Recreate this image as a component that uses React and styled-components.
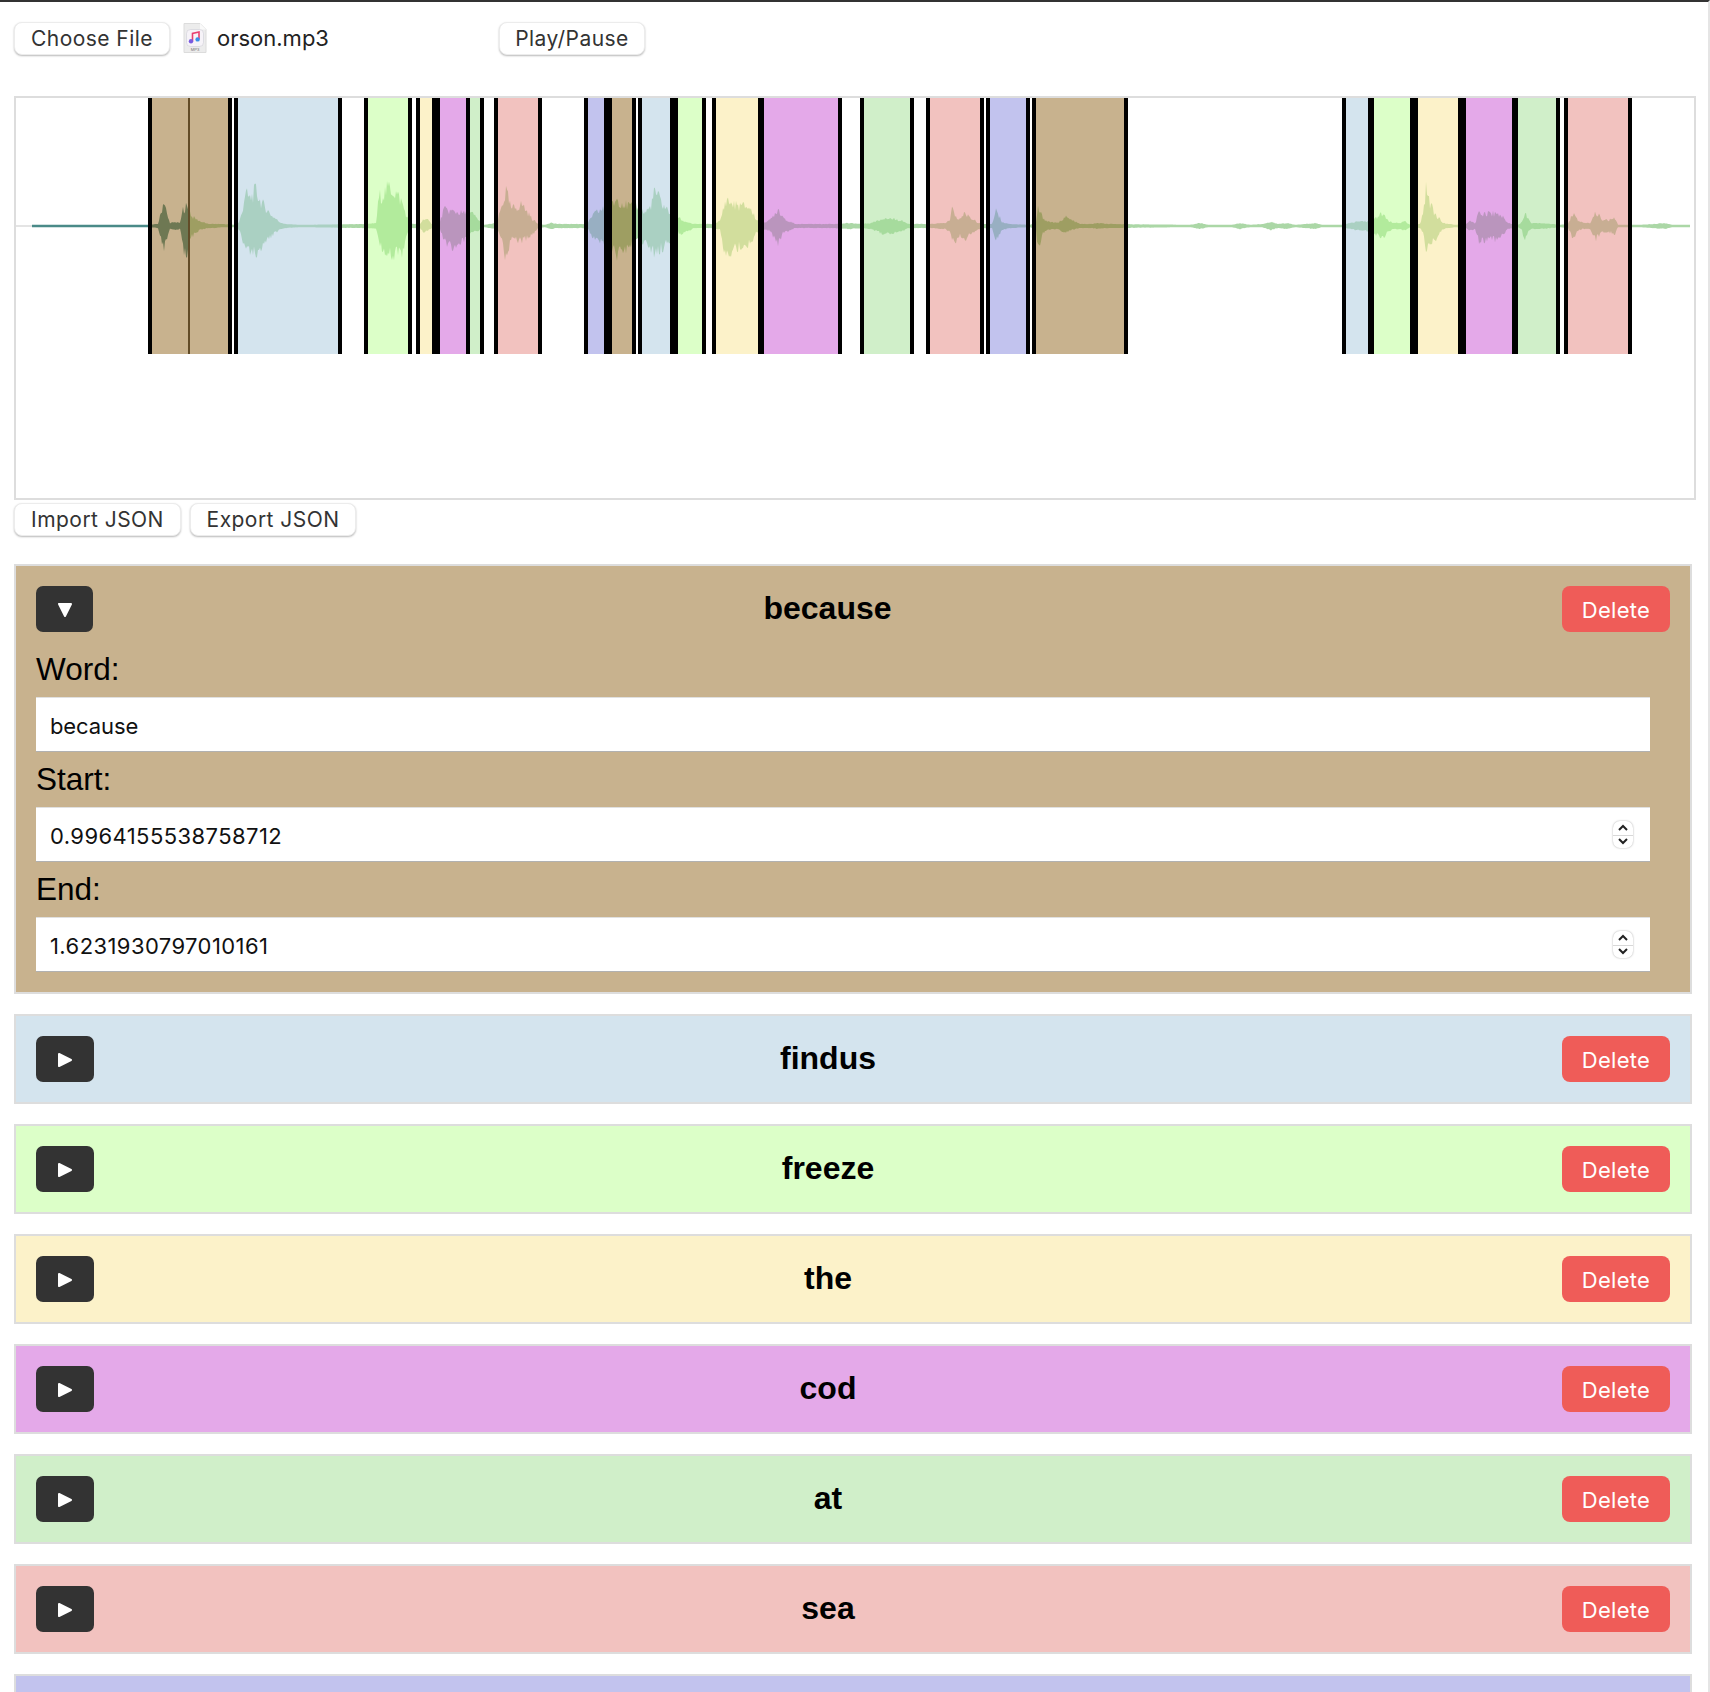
import React from "react";
import styled, { createGlobalStyle } from "styled-components";

const COLORS = {
    tan: "#c8b28e",
    blue: "#d4e4ee",
    green: "#dcffc8",
    yellow: "#fcf2c9",
    pink: "#e4a9e9",
    mint: "#d0efc9",
    red: "#f2c2bf",
    indigo: "#c2c3ee",
};

const REGIONS = [
    [148, 232, "tan"], [234, 342, "blue"], [364, 412, "green"], [416, 436, "yellow"],
    [436, 470, "pink"], [466, 484, "mint"], [494, 542, "red"], [584, 608, "indigo"],
    [608, 636, "tan"], [638, 674, "blue"], [674, 706, "green"], [712, 762, "yellow"],
    [760, 842, "pink"], [860, 914, "mint"], [926, 984, "red"], [986, 1030, "indigo"],
    [1032, 1128, "tan"], [1342, 1372, "blue"], [1370, 1414, "green"], [1414, 1462, "yellow"],
    [1462, 1516, "pink"], [1514, 1560, "mint"], [1564, 1632, "red"],
];

const WORDS = [
    { word: "findus", color: "blue" },
    { word: "freeze", color: "green" },
    { word: "the", color: "yellow" },
    { word: "cod", color: "pink" },
    { word: "at", color: "mint" },
    { word: "sea", color: "red" },
];

// envelope of the audio: x, height above the centre line, height below it
const ENVELOPE = [
    [32, 1, 1], [148, 1, 1], [158, 2, 2], [161, 14, 12], [164, 29, 26], [167, 12, 14], [170, 3, 3],
    [176, 4, 4], [180, 3, 3], [183, 18, 24], [186, 21, 33], [189, 18, 24], [192, 10, 11], [200, 5, 4],
    [208, 2, 2], [215, 2, 2], [222, 2, 1], [236, 1, 1], [239, 4, 4], [242, 14, 12], [245, 36, 24], [250, 30, 26],
    [256, 39, 30], [260, 28, 24], [264, 22, 20], [272, 11, 10], [280, 4, 3], [285, 2, 2], [300, 1, 1],
    [368, 2, 2], [376, 3, 3], [379, 32, 16], [384, 36, 28], [390, 43, 32], [396, 36, 30], [402, 26, 30],
    [407, 9, 10], [412, 2, 2], [420, 2, 2], [424, 8, 7], [428, 6, 5], [432, 2, 2], [440, 5, 4], [444, 18, 16],
    [452, 16, 24], [463, 14, 17], [473, 13, 6], [479, 6, 5], [484, 1, 1], [490, 2, 2], [497, 3, 3],
    [501, 19, 12], [506, 38, 36], [511, 19, 14], [516, 20, 14], [522, 24, 17], [528, 14, 12], [532, 8, 10],
    [538, 2, 2], [545, 1, 1], [551, 3, 3], [558, 2, 2], [584, 2, 2], [588, 3, 3], [592, 11, 11],
    [598, 16, 18], [605, 19, 16], [611, 22, 24], [617, 30, 32], [626, 23, 27], [632, 21, 20], [638, 23, 18],
    [644, 14, 17], [650, 20, 24], [655, 38, 29], [663, 23, 24], [669, 16, 17], [674, 14, 12], [678, 10, 7],
    [683, 5, 8], [688, 4, 6], [693, 2, 2], [712, 2, 2], [720, 5, 4], [726, 29, 39], [734, 23, 24],
    [749, 21, 20], [757, 6, 6], [764, 4, 4], [770, 6, 5], [778, 19, 20], [783, 10, 8], [787, 6, 6], [795, 2, 2],
    [812, 2, 2], [835, 2, 2], [850, 3, 3], [862, 2, 2], [871, 3, 3], [878, 6, 6], [885, 9, 9], [902, 6, 6],
    [908, 2, 2], [930, 2, 2], [945, 3, 3], [950, 6, 6], [952, 20, 17], [956, 9, 20], [960, 8, 10], [965, 14, 14],
    [972, 8, 8], [977, 4, 4], [984, 2, 2], [992, 2, 2], [996, 19, 17], [1002, 4, 4], [1010, 2, 2], [1030, 1, 1],
    [1036, 4, 4], [1038, 19, 26], [1043, 9, 8], [1047, 5, 4], [1058, 3, 3], [1065, 10, 7], [1072, 6, 4],
    [1080, 2, 2], [1092, 2, 2], [1099, 3, 3], [1106, 2, 2], [1190, 1, 1], [1200, 3, 3], [1208, 1, 1],
    [1232, 1, 1], [1240, 3, 3], [1250, 1, 1], [1262, 2, 1], [1271, 4, 4], [1278, 2, 2], [1286, 3, 3], [1295, 1, 1],
    [1315, 3, 3], [1322, 1, 1], [1342, 1, 1], [1351, 3, 3], [1359, 5, 5], [1366, 5, 5], [1374, 8, 8], [1382, 13, 14],
    [1388, 6, 6], [1393, 3, 3], [1400, 3, 3], [1405, 5, 5], [1410, 1, 1], [1420, 2, 2], [1423, 14, 8], [1426, 43, 27],
    [1430, 26, 22], [1435, 13, 15], [1443, 3, 3], [1455, 1, 1], [1466, 2, 2], [1470, 5, 5], [1475, 3, 3], [1479, 14, 17],
    [1490, 14, 15], [1500, 13, 14], [1508, 3, 3], [1518, 1, 1], [1522, 4, 4], [1525, 17, 18], [1528, 8, 6], [1531, 3, 3],
    [1542, 3, 3], [1560, 1, 1], [1568, 2, 2], [1573, 14, 13], [1578, 6, 5], [1583, 3, 3], [1590, 3, 3], [1596, 15, 14],
    [1602, 7, 7], [1608, 6, 6], [1615, 8, 8], [1618, 1, 1], [1640, 1, 1], [1665, 3, 3], [1672, 1, 1], [1690, 1, 1],
];

const CENTER = 128;
const PROGRESS_END = 189;

// same jagged noise on every render
const noise = (x) => {
    const n = Math.sin(x * 12.9898) * 43758.5453;
    return 0.55 + 0.45 * (n - Math.floor(n));
};

const amplitudeAt = (x) => {
    for (let i = 1; i < ENVELOPE.length; i++) {
        const [x0, up0, down0] = ENVELOPE[i - 1];
        const [x1, up1, down1] = ENVELOPE[i];
        if (x <= x1) {
            const t = (x - x0) / (x1 - x0);
            return [up0 + (up1 - up0) * t, down0 + (down1 - down0) * t];
        }
    }
    return [1, 1];
};

const wavePath = (from, to) => {
    const top = [];
    const bottom = [];
    for (let x = from; x <= to; x += 1) {
        const [up, down] = amplitudeAt(x);
        const high = 1.15 + (up - 1) * noise(x) * 1.15;
        const low = 1.15 + (down - 1) * noise(x + 7.3) * 1.15;
        top.push(`${x} ${(CENTER - high).toFixed(1)}`);
        bottom.unshift(`${x} ${(CENTER + low).toFixed(1)}`);
    }
    return `M${top.join("L")}L${bottom.join("L")}Z`;
};

// colour that gives the card colour when laid over white at half opacity
const overlay = (hex) => {
    const channel = (start) => Math.max(0, parseInt(hex.substr(start, 2), 16) * 2 - 255);
    return `rgba(${channel(1)}, ${channel(3)}, ${channel(5)}, 0.5)`;
};

const GlobalStyle = createGlobalStyle`
    html, body {
        margin: 0;
        height: 1692px;
        overflow: hidden;
        background: #fff;
    }
`;

const Page = styled.div`
    height: 1692px;
    box-sizing: border-box;
    border-top: 2px solid #333;
    border-right: 2px solid #e5e5e5;
    padding: 19px 12px 0 14px;
    overflow: hidden;
    font-family: Inter, "Liberation Sans", sans-serif;
`;

const TopBar = styled.div`
    display: flex;
    align-items: center;
    height: 34px;
`;

const FileName = styled.span`
    font-size: 22px;
    color: #222;
    margin-left: 10px;
    width: 282px;
`;

const FileIcon = styled.svg`
    width: 24px;
    height: 30px;
    margin-left: 13px;
    flex: none;
`;

const Button = styled.button`
    height: 33px;
    box-sizing: border-box;
    padding: 0;
    width: ${(p) => p.$width}px;
    font-family: inherit;
    font-size: 21px;
    letter-spacing: 0.45px;
    color: #333;
    background: #fff;
    border: 1px solid #ececec;
    border-radius: 8px;
    box-shadow: 0 1px 2px rgba(0, 0, 0, 0.28);
`;

const WaveBox = styled.div`
    margin-top: 41px;
    height: 404px;
    box-sizing: border-box;
    border: 2px solid #ddd;
`;

const Track = styled.div`
    position: relative;
    height: 256px;
`;

const WaveSvg = styled.svg`
    position: absolute;
    left: -16px;
    top: 0;
`;

const Cursor = styled.div`
    position: absolute;
    top: 0;
    left: 172px;
    width: 2px;
    height: 256px;
    background: #333;
`;

const Region = styled.div.attrs((p) => ({
    style: { left: p.$from - 16, width: p.$to - p.$from, background: overlay(p.$color) },
}))`
    position: absolute;
    top: 0;
    height: 256px;
    box-sizing: border-box;
    border-left: 4px solid #000;
    border-right: 4px solid #000;
`;

const JsonBar = styled.div`
    display: flex;
    gap: 9px;
    margin-top: 3px;
`;

const Cards = styled.div`
    display: flex;
    flex-direction: column;
    gap: 20px;
    width: 1678px;
    margin-top: 28px;
`;

const Card = styled.div`
    flex: none;
    padding: 20px;
    min-height: 46px;
    border: 2px solid #ddd;
    background: ${(p) => p.$color};
`;

const CardHeader = styled.div`
    display: flex;
    align-items: center;
    height: 46px;
`;

const Toggle = styled.button`
    flex: none;
    display: flex;
    align-items: center;
    justify-content: center;
    width: ${(p) => (p.$open ? 57 : 58)}px;
    height: 46px;
    padding: 1px 0 0;
    border: 0;
    border-radius: 7px;
    background: #333;
`;

const Title = styled.h2`
    flex: 1;
    margin: 0 0 2px;
    text-align: center;
    font-family: "Liberation Sans", Arial, sans-serif;
    font-size: 32px;
    font-weight: 700;
    color: #000;
`;

const DeleteButton = styled.button`
    flex: none;
    width: 108px;
    height: 46px;
    padding: 2px 0 0;
    border: 0;
    border-radius: 8px;
    background: #ef5c58;
    color: #fff;
    font-family: inherit;
    font-size: 22px;
    letter-spacing: 0.3px;
`;

const Fields = styled.div`
    margin-top: 10px;
    width: 1614px;
`;

const FieldLabel = styled.label`
    display: block;
    height: 55px;
    line-height: 55px;
    font-family: "Liberation Sans", Arial, sans-serif;
    font-size: 31.5px;
    color: #000;
`;

const InputWrap = styled.div`
    position: relative;
`;

const Input = styled.input`
    display: block;
    width: 100%;
    height: 55px;
    box-sizing: border-box;
    padding: 2px 14px 0;
    border: 0;
    border-top: 1px solid rgba(0, 0, 0, 0.12);
    border-bottom: 1px solid rgba(0, 0, 0, 0.3);
    border-radius: 0;
    background: #fff;
    font-family: inherit;
    font-size: 22px;
    letter-spacing: ${(p) => (p.$numeric ? 0.42 : -0.1)}px;
    color: #111;
    outline: none;
`;

const Spinner = styled.div`
    position: absolute;
    right: 17px;
    top: 14px;
    width: 20px;
    height: 27px;
    display: grid;
    grid-template-rows: 1fr 1fr;
    border-radius: 7px;
    background: #fff;
    box-shadow: 0 0 2px rgba(0, 0, 0, 0.35);
    overflow: hidden;

    svg {
        width: 14px;
        height: 9px;
        margin: auto;
    }
    div {
        display: flex;
    }
    div + div {
        border-top: 1px solid #d8d8d8;
    }
`;

const Triangle = ({ open }) => (
    <svg width="18" height="18" viewBox="0 0 18 18">
        <polygon
            points={open ? "3,3 15,3 9,15" : "3,3 15,9 3,15"}
            fill="#fff"
            stroke="#fff"
            strokeWidth="2"
            strokeLinejoin="round"
        />
    </svg>
);

const Mp3Icon = () => (
    <FileIcon viewBox="0 0 24 30">
        <path d="M1 0.5h16l6 6v23H1z" fill="#ececec" stroke="#dcdcdc" />
        <path d="M17 0.5v6h6z" fill="#fafafa" />
        <rect x="3.5" y="6.5" width="17" height="17" rx="4" fill="#f6f3f8" stroke="#cfcfd6" strokeWidth="0.6" />
        <path d="M9.5 18V10.5l6.5-1.5V16" fill="none" stroke="#e83f6f" strokeWidth="1.6" />
        <circle cx="8" cy="18.2" r="2.2" fill="#7a5be0" />
        <circle cx="14.6" cy="16.4" r="2.2" fill="#3a8fe8" />
        <text x="12" y="28.4" textAnchor="middle" fontSize="4.2" fontFamily="Liberation Sans, sans-serif" fill="#777">MP3</text>
    </FileIcon>
);

const Stepper = () => (
    <Spinner>
        <div>
            <svg viewBox="0 0 14 9">
                <path d="M3 7l4-4 4 4" fill="none" stroke="#222" strokeWidth="2" />
            </svg>
        </div>
        <div>
            <svg viewBox="0 0 14 9">
                <path d="M3 2l4 4 4-4" fill="none" stroke="#222" strokeWidth="2" />
            </svg>
        </div>
    </Spinner>
);

const Waveform = () => (
    <WaveBox>
        <Track>
            <WaveSvg width="1710" height="256">
                <rect x="16" y="127.5" width="16" height="1" fill="#c9c9c9" />
                <path d={wavePath(32, PROGRESS_END)} fill="#4a8a88" />
                <path d={wavePath(PROGRESS_END, 1690)} fill="#abd7a6" />
            </WaveSvg>
            <Cursor />
            {REGIONS.map(([from, to, color], index) => (
                <Region key={index} $from={from} $to={to} $color={COLORS[color]} />
            ))}
        </Track>
    </WaveBox>
);

const WordCard = ({ word, color, start, end }) => {
    const open = start !== undefined;
    return (
        <Card $color={COLORS[color]}>
            <CardHeader>
                <Toggle $open={open}>
                    <Triangle open={open} />
                </Toggle>
                <Title>{word}</Title>
                <DeleteButton>Delete</DeleteButton>
            </CardHeader>
            {open && (
                <Fields>
                    <FieldLabel>Word:</FieldLabel>
                    <InputWrap>
                        <Input type="text" defaultValue={word} />
                    </InputWrap>
                    <FieldLabel>Start:</FieldLabel>
                    <InputWrap>
                        <Input type="text" $numeric defaultValue={start} />
                        <Stepper />
                    </InputWrap>
                    <FieldLabel>End:</FieldLabel>
                    <InputWrap>
                        <Input type="text" $numeric defaultValue={end} />
                        <Stepper />
                    </InputWrap>
                </Fields>
            )}
        </Card>
    );
};

const App = () => (
    <Page>
        <GlobalStyle />
        <TopBar>
            <Button $width={156}>Choose File</Button>
            <Mp3Icon />
            <FileName>orson.mp3</FileName>
            <Button $width={146}>Play/Pause</Button>
        </TopBar>
        <Waveform />
        <JsonBar>
            <Button $width={167}>Import JSON</Button>
            <Button $width={166}>Export JSON</Button>
        </JsonBar>
        <Cards>
            <WordCard word="because" color="tan" start="0.9964155538758712" end="1.6231930797010161" />
            {WORDS.map((item) => (
                <WordCard key={item.word} word={item.word} color={item.color} />
            ))}
            <Card $color={COLORS.indigo} />
        </Cards>
    </Page>
);

export default App;
